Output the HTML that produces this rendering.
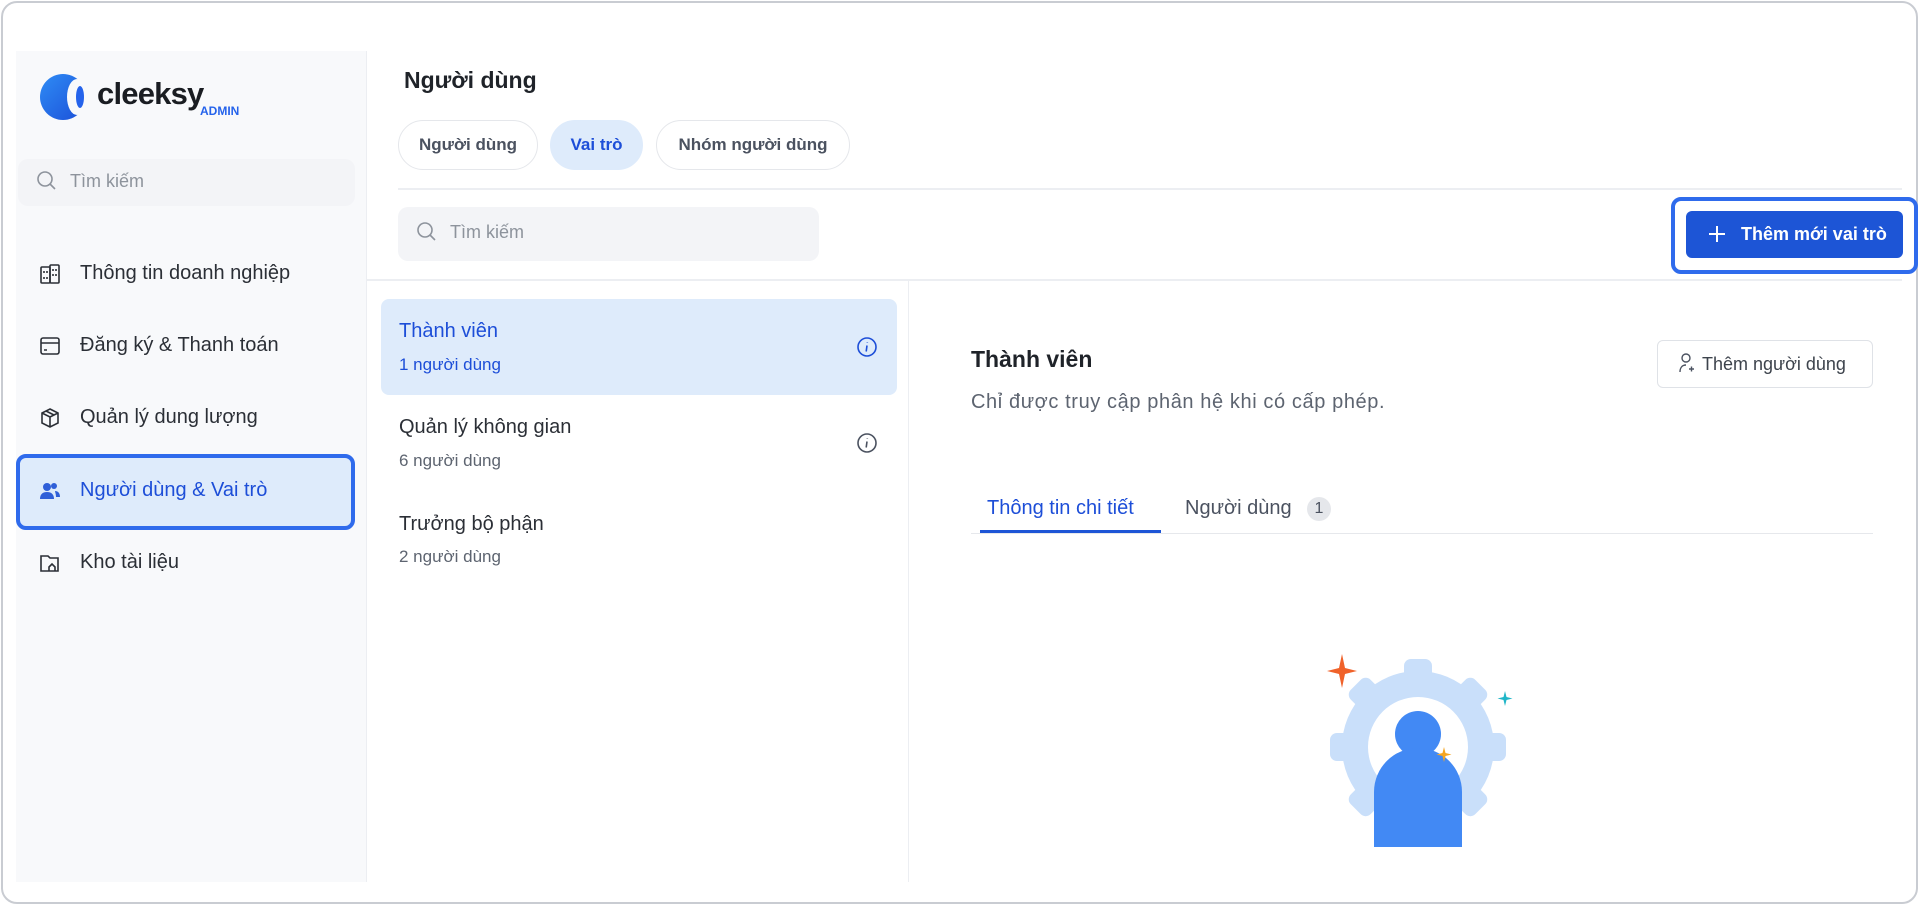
<!DOCTYPE html>
<html><head><meta charset="utf-8"><style>
*{box-sizing:border-box;margin:0;padding:0}
body{width:1920px;height:906px;background:#fff;font-family:"Liberation Sans",sans-serif;position:relative;overflow:hidden;color:#1f2329}
.frame{position:absolute;left:1px;top:1px;width:1917px;height:903px;border:2px solid #c9ccd2;border-radius:16px}
.side{position:absolute;left:16px;top:51px;width:351px;height:831px;background:#f8f9fb;border-right:1px solid #eceef2}
.abs{position:absolute}
.nav{position:absolute;left:80px;font-size:20px;color:#2b2f36}
.nav svg{position:absolute;left:-41px;top:1px}
.pill{position:absolute;top:120px;height:50px;border:1px solid #e5e7eb;border-radius:25px;font-size:17px;font-weight:bold;color:#4b5260;line-height:48px;text-align:center}
.search{position:absolute;background:#f3f4f7;border-radius:10px;font-size:18px;color:#8d939c}
.t{font-size:20px;color:#2b2f36;position:absolute;left:399px}
.s{font-size:17px;color:#5d6470;position:absolute;left:399px}
</style></head><body>
<div class="frame"></div>
<div class="side"></div>
<!-- logo -->
<svg class="abs" style="left:40px;top:73px" width="48" height="48" viewBox="0 0 48 48"><defs><linearGradient id="g" x1="0" y1="0" x2="1" y2="1"><stop offset="0" stop-color="#2f8cf5"/><stop offset="1" stop-color="#1b4fd8"/></linearGradient></defs><circle cx="23" cy="24" r="23" fill="url(#g)"/><ellipse cx="37" cy="24" rx="10" ry="18" fill="#f8f9fb"/><ellipse cx="40" cy="24" rx="4" ry="11" fill="#2563eb"/></svg>
<div class="abs" style="left:97px;top:76px;font-size:31px;font-weight:bold;color:#1a1d22;letter-spacing:-0.8px">cleeksy</div>
<div class="abs" style="left:200px;top:104px;font-size:12px;font-weight:bold;color:#2563eb">ADMIN</div>
<div class="search" style="left:18px;top:159px;width:337px;height:47px;padding:12px 0 0 52px">Tìm kiếm</div>
<svg class="abs" style="left:36px;top:170px" width="22" height="22" viewBox="0 0 22 22" fill="none" stroke="#8d939c" stroke-width="1.6"><circle cx="9" cy="9" r="7"/><path d="M14 14l5 5"/></svg>
<div class="abs" style="left:16px;top:454px;width:339px;height:76px;background:#deebfb;border:4px solid #2f6bec;border-radius:10px"></div>
<div class="nav" style="top:262px"><svg width="22" height="22" viewBox="0 0 22 22" fill="none" stroke="#2b2f36" stroke-width="1.6"><rect x="2" y="4" width="9" height="16" rx="1"/><rect x="11" y="2" width="9" height="18" rx="1"/><path d="M5 8v2M8 8v2M14 6v2M17 6v2M14 11v2M17 11v2M5 14v2M8 14v2"/></svg>Thông tin doanh nghiệp</div>
<div class="nav" style="top:334px"><svg width="22" height="22" viewBox="0 0 22 22" fill="none" stroke="#2b2f36" stroke-width="1.6"><rect x="2" y="3" width="18" height="16" rx="2"/><path d="M2 8h18M5 15h3"/></svg>Đăng ký &amp; Thanh toán</div>
<div class="nav" style="top:406px"><svg width="22" height="22" viewBox="0 0 22 22" fill="none" stroke="#2b2f36" stroke-width="1.6"><path d="M11 2l8 4v10l-8 4-8-4V6z M3 6l8 4 8-4 M11 10v10 M7 4l8 4"/></svg>Quản lý dung lượng</div>
<div class="nav" style="top:479px;color:#1d4ed8"><svg width="22" height="22" viewBox="0 0 22 22" fill="#2f5fd8"><circle cx="8" cy="7" r="4"/><path d="M1 19c0-5 3-7 7-7s7 2 7 7z"/><circle cx="15" cy="6" r="3"/><path d="M16 11c3 0 5 2 5 6h-4c0-3-1-5-1-6z"/></svg>Người dùng &amp; Vai trò</div>
<div class="nav" style="top:551px"><svg width="22" height="22" viewBox="0 0 22 22" fill="none" stroke="#2b2f36" stroke-width="1.6"><path d="M2 4h7l2 2h8v13H2z"/><path d="M10 19v-4l3-3 3 3v4"/></svg>Kho tài liệu</div>

<div class="abs" style="left:404px;top:67px;font-size:23px;font-weight:bold;color:#1f2329">Người dùng</div>
<div class="pill" style="left:398px;width:140px">Người dùng</div>
<div class="pill" style="left:550px;width:93px;background:#deebfb;border-color:#deebfb;color:#1d4ed8">Vai trò</div>
<div class="pill" style="left:656px;width:194px">Nhóm người dùng</div>
<div class="abs" style="left:398px;top:188px;width:1504px;height:2px;background:#eceef2"></div>
<div class="search" style="left:398px;top:207px;width:421px;height:54px;padding:15px 0 0 52px">Tìm kiếm</div>
<svg class="abs" style="left:416px;top:221px" width="22" height="22" viewBox="0 0 22 22" fill="none" stroke="#8d939c" stroke-width="1.6"><circle cx="9" cy="9" r="7"/><path d="M14 14l5 5"/></svg>
<div class="abs" style="left:1671px;top:197px;width:247px;height:77px;border:4px solid #2f6bec;border-radius:10px"></div>
<div class="abs" style="left:1686px;top:211px;width:217px;height:47px;background:#1d55d6;border-radius:6px;color:#fff;font-size:18px;font-weight:bold;line-height:47px;padding-left:55px">Thêm mới vai trò</div>
<svg class="abs" style="left:1707px;top:224px" width="20" height="20" viewBox="0 0 20 20" stroke="#fff" stroke-width="2"><path d="M10 2v16M2 10h16"/></svg>
<div class="abs" style="left:367px;top:279px;width:1535px;height:2px;background:#eceef2"></div>
<div class="abs" style="left:908px;top:280px;width:1px;height:602px;background:#eceef2"></div>

<div class="abs" style="left:381px;top:299px;width:516px;height:96px;background:#deebfb;border-radius:8px"></div>
<div class="t" style="top:320px;color:#1d4ed8">Thành viên</div>
<div class="s" style="top:355px;color:#1d4ed8">1 người dùng</div>
<svg class="abs" style="left:856px;top:336px" width="22" height="22" viewBox="0 0 22 22" fill="none" stroke="#1d4ed8" stroke-width="1.6"><circle cx="11" cy="11" r="9"/><path d="M11 9.5l-.8 6M11.3 6.5v.5"/></svg>
<div class="t" style="top:416px">Quản lý không gian</div>
<div class="s" style="top:451px">6 người dùng</div>
<svg class="abs" style="left:856px;top:432px" width="22" height="22" viewBox="0 0 22 22" fill="none" stroke="#4b5260" stroke-width="1.6"><circle cx="11" cy="11" r="9"/><path d="M11 9.5l-.8 6M11.3 6.5v.5"/></svg>
<div class="t" style="top:513px">Trưởng bộ phận</div>
<div class="s" style="top:547px">2 người dùng</div>

<div class="abs" style="left:971px;top:346px;font-size:23px;font-weight:bold;color:#1f2329">Thành viên</div>
<div class="abs" style="left:971px;top:391px;font-size:20px;color:#5d6470;letter-spacing:0.6px">Chỉ được truy cập phân hệ khi có cấp phép.</div>
<div class="abs" style="left:1657px;top:340px;width:216px;height:48px;border:1px solid #dfe2e7;border-radius:6px;font-size:18px;color:#3d434c;line-height:46px;padding-left:44px">Thêm người dùng</div>
<svg class="abs" style="left:1677px;top:352px" width="18" height="24" viewBox="0 0 18 24" fill="none" stroke="#4b5260" stroke-width="1.4"><circle cx="9" cy="6" r="4"/><path d="M3 20c0-4 2-7 6-7M12 17h5M14.5 14.5v5"/></svg>
<div class="abs" style="left:987px;top:497px;font-size:20px;color:#1d4ed8">Thông tin chi tiết</div>
<div class="abs" style="left:980px;top:530px;width:181px;height:3px;background:#1d55d6"></div>
<div class="abs" style="left:1185px;top:497px;font-size:20px;color:#4b5260">Người dùng</div>
<div class="abs" style="left:1307px;top:497px;width:24px;height:24px;border-radius:12px;background:#e5e7eb;font-size:16px;text-align:center;line-height:24px;color:#4b5260">1</div>
<div class="abs" style="left:971px;top:533px;width:902px;height:1px;background:#e6e8ec"></div>

<svg class="abs" style="left:1320px;top:650px" width="200" height="200" viewBox="0 0 200 200">
<g transform="translate(98,97)" fill="#c9dffa">
<circle r="76"/>
<g><rect x="-14" y="-88" width="28" height="26" rx="7"/><rect x="-14" y="-88" width="28" height="26" rx="7" transform="rotate(45)"/><rect x="-14" y="-88" width="28" height="26" rx="7" transform="rotate(90)"/><rect x="-14" y="-88" width="28" height="26" rx="7" transform="rotate(135)"/><rect x="-14" y="-88" width="28" height="26" rx="7" transform="rotate(180)"/><rect x="-14" y="-88" width="28" height="26" rx="7" transform="rotate(225)"/><rect x="-14" y="-88" width="28" height="26" rx="7" transform="rotate(270)"/><rect x="-14" y="-88" width="28" height="26" rx="7" transform="rotate(315)"/></g>
<circle r="50" fill="#fff"/>
</g>
<circle cx="98" cy="84" r="23" fill="#4289f4"/>
<path d="M54 197v-55a44 44 0 0 1 88 0v55z" fill="#4289f4"/>
<path d="M22 4l3 14 12 3-12 3-3 14-3-14-12-3 12-3z" fill="#f0622a"/>
<path d="M185 41l1.5 6 6 1.5-6 1.5-1.5 6-1.5-6-6-1.5 6-1.5z" fill="#20b6c8"/>
<path d="M124 97l1.5 6 6 1.5-6 1.5-1.5 6-1.5-6-6-1.5 6-1.5z" fill="#f5a623"/>
</svg>
</body></html>
